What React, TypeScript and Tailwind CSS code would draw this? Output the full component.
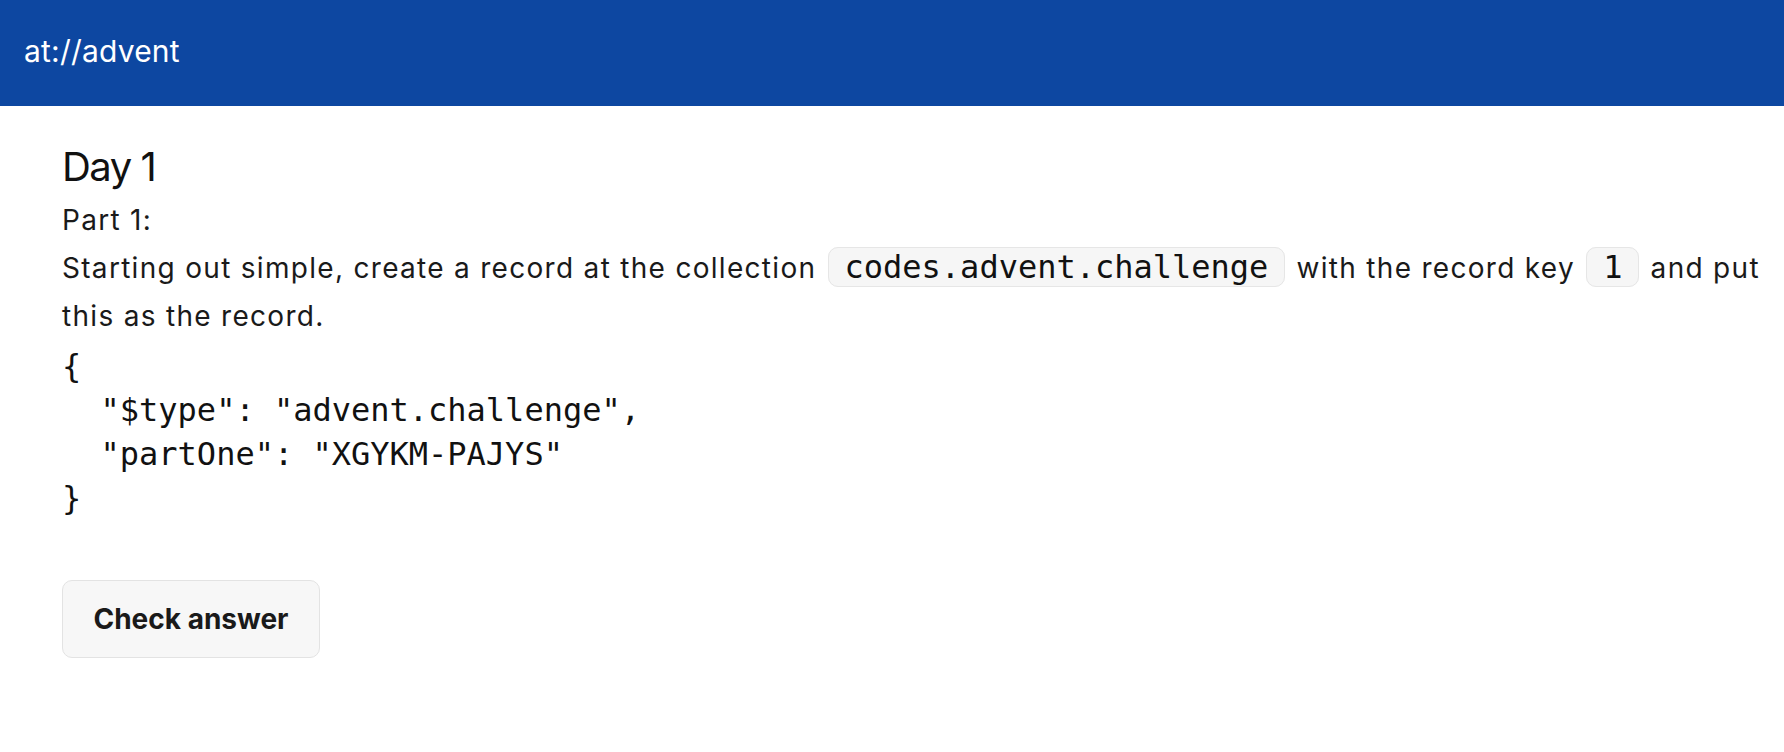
import React from 'react';

const InlineCode: React.FC<{ children: React.ReactNode }> = ({ children }) => (
  <code className="mx-[2px] rounded-[10px] border border-[#e6e6e6] bg-[#f6f6f6] px-[16px] font-['DejaVu_Sans_Mono',monospace] text-[32px] leading-[38px] tracking-normal text-[#111]">
    {children}
  </code>
);

const record = `{
  "$type": "advent.challenge",
  "partOne": "XGYKM-PAJYS"
}`;

const App: React.FC = () => {
  return (
    <div className="min-h-screen bg-white font-['Inter',sans-serif] text-[#1a1a1a]">
      <header className="h-[106px] bg-[#0d47a1] pl-[24px] pt-[33px]">
        <a href="#" className="text-[30px] leading-[36px] tracking-[0.2px] text-white">
          at://advent
        </a>
      </header>

      <main className="pl-[62px] pr-[6px] pt-[37px]">
        <h2 className="text-[40px] font-normal leading-[48px] tracking-[-1.5px] text-[#111]">Day 1</h2>

        <div className="mt-[5px] text-[28px] leading-[48px] tracking-[1.3px]">
          <p>Part 1:</p>
          <p>
            Starting out simple, create a record at the collection{' '}
            <InlineCode>codes.advent.challenge</InlineCode> with the record key{' '}
            <InlineCode>1</InlineCode> and put this as the record.
          </p>
        </div>

        <pre className="mt-[4px] font-['DejaVu_Sans_Mono',monospace] text-[32px] leading-[44px] text-[#111]">
          {record}
        </pre>

        <button className="mt-[60px] flex h-[78px] w-[258px] items-center justify-center rounded-[10px] border border-[#e3e3e3] bg-[#f7f7f7] text-[28px] font-bold text-[#1a1a1a]">
          Check answer
        </button>
      </main>
    </div>
  );
};

export default App;
